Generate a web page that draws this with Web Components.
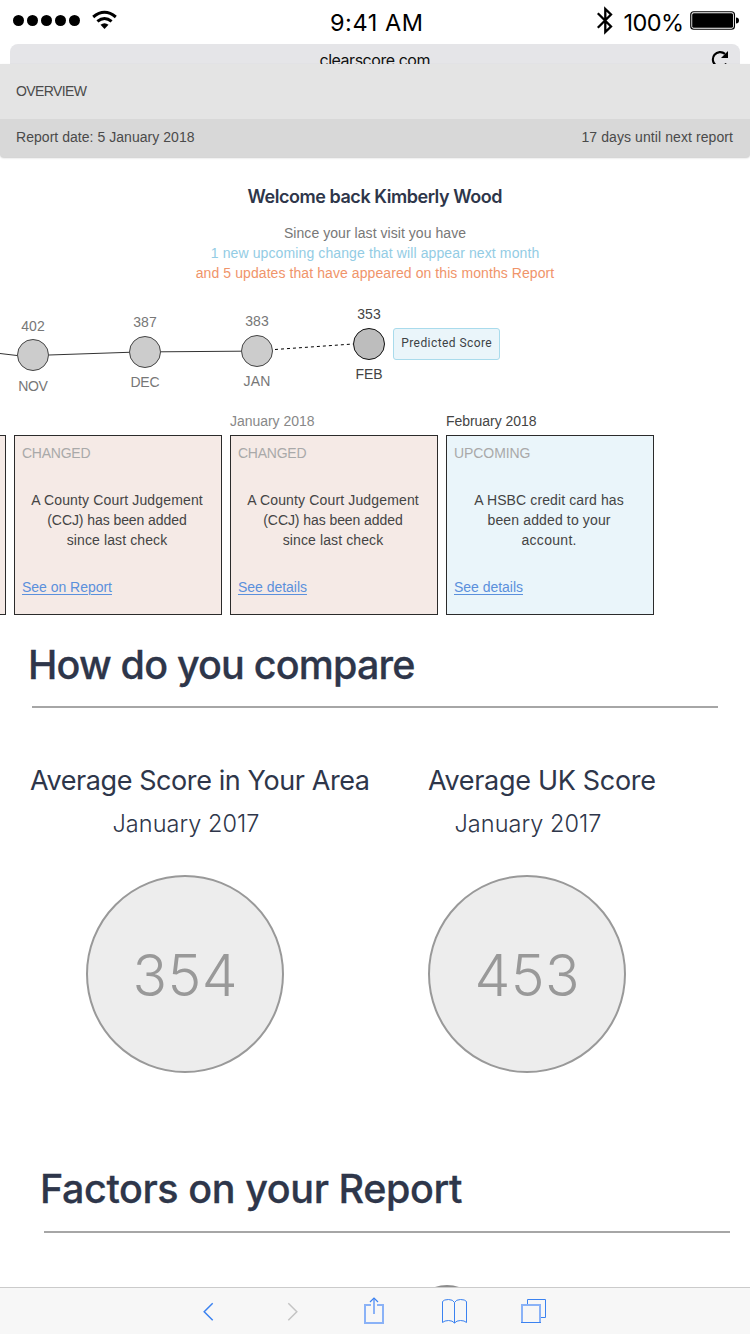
<!DOCTYPE html>
<html lang="en">
<head>
<meta charset="utf-8">
<title>Overview</title>
<style>
body{margin:0;background:#fff}
</style>
</head>
<body>
<score-app></score-app>
<script>
const define = (name, html, setup) => {
  const t = document.createElement('template');
  t.innerHTML = html;
  customElements.define(name, class extends HTMLElement {
    connectedCallback() {
      if (this.shadowRoot) return;
      this.attachShadow({mode: 'open'}).append(t.content.cloneNode(true));
      if (setup) setup(this, this.shadowRoot);
    }
  });
};

/* A line of text tracked out or in to a given advance width. */
define('fit-text', `<style>
:host{display:block;white-space:nowrap;width:max-content}
</style><slot></slot>`, el => {
  const w = parseFloat(el.getAttribute('w'));
  if (!w) return;
  const n = el.textContent.length;
  const natural = el.getBoundingClientRect().width;
  const ls = (w - natural) / (n - 1);
  el.style.letterSpacing = ls.toFixed(3) + 'px';
  el.style.marginRight = (-ls).toFixed(3) + 'px';
});

define('status-bar', `<style>
:host{display:grid;grid-template-columns:1fr 92px 1fr;height:44px;font:400 23.5px/28px Inter,sans-serif;color:#000}
svg{display:block}
.time{padding:9px 0 0 1px}
.right{display:flex;justify-content:flex-end;gap:6px;padding-right:10px}
.pct{padding:9px 0 0 5px}
</style>
<svg width="120" height="44" viewBox="0 0 120 44">
 <g><circle cx="18.5" cy="20.5" r="5.5"/><circle cx="32.5" cy="20.5" r="5.5"/><circle cx="46.5" cy="20.5" r="5.5"/><circle cx="60.5" cy="20.5" r="5.5"/><circle cx="74.5" cy="20.5" r="5.5"/></g>
 <g fill="none" stroke="#000" stroke-width="3"><path d="M93.2 17Q104.5 7.600 115.800 17"/><path d="M97.400 21.400Q104.500 15.600 111.600 21.400"/></g>
 <path d="M100.500 24.800Q104.500 21.600 108.500 24.800L104.500 29Z"/>
</svg>
<div class="time"><fit-text w="93">9:41 AM</fit-text></div>
<div class="right">
 <svg width="18" height="44" viewBox="594 0 18 44"><path d="M596.800 13.200L610 26.500L604.300 32V9L610 14.500L596.800 27.800" fill="none" stroke="#000" stroke-width="2.300"/></svg>
 <div class="pct"><fit-text w="60.500">100%</fit-text></div>
 <svg width="50" height="44" viewBox="690 0 50 44"><rect x="690.750" y="11.750" width="43.700" height="17.500" rx="3" fill="none" stroke="#000" stroke-width="1.200"/><rect x="692.200" y="13.200" width="40.800" height="14.600" rx="1.500"/><path d="M736 17.500Q739 17.500 739 20.500T736 23.500Z"/></svg>
</div>`);

define('url-bar', `<style>
:host{display:grid;grid-template-columns:60px 1fr 60px;justify-items:center;height:20px;margin:0 10px;overflow:hidden;background:#e5e5e8;border-radius:8px 8px 0 0;font:400 16px/20px Inter,sans-serif;color:#111}
fit-text{margin-top:6px}
</style>
<span></span><fit-text w="111">clearscore.com</fit-text>
<svg width="60" height="20" viewBox="680 44 60 20"><path d="M726.200 63.500A7.300 7.300 0 1 1 725 53.900" fill="none" stroke="#000" stroke-width="2.100"/><path d="M728 51V58H721Z"/></svg>`);

define('report-header', `<style>
:host{display:block;font:14px/20px "Liberation Sans",sans-serif;color:#4a4a4a;background:#d8d8d8;border-radius:0 0 4px 4px;box-shadow:0 1px 2px rgba(0,0,0,.22)}
.top{height:38px;padding:17px 16px 0;background:#e4e4e4}
.sub{display:flex;justify-content:space-between;height:30px;padding:8px 17px 0 16px}
</style>
<div class="top"><fit-text w="71">OVERVIEW</fit-text></div>
<div class="sub"><fit-text w="178.500">Report date: 5 January 2018</fit-text><fit-text w="151.500">17 days until next report</fit-text></div>`);

define('welcome-note', `<style>
:host{display:flex;flex-direction:column;align-items:center;height:139px;box-sizing:border-box;padding-top:28px;font:14px/20px "Liberation Sans",sans-serif;color:#777}
.hi{font:600 18px/24px Inter,sans-serif;color:#2e364a;margin-bottom:14px}
.new{color:#93cce4}.upd{color:#f0946a}
</style>
<fit-text class="hi" w="255">Welcome back Kimberly Wood</fit-text>
<fit-text w="182">Since your last visit you have</fit-text>
<fit-text class="new" w="328.500">1 new upcoming change that will appear next month</fit-text>
<fit-text class="upd" w="358.500">and 5 updates that have appeared on this months Report</fit-text>`);

define('score-node', `<style>
:host{position:absolute;display:flex;flex-direction:column;align-items:center;width:60px;color:#777}
i{box-sizing:border-box;width:32px;height:32px;margin:4px 0;border-radius:50%;border:1px solid #444;background:#ccc}
:host([next]){color:#444}
:host([next]) i{background:#bdbdbd;border-color:#111}
:host([low]) i{margin:3px 0 5px}
</style><slot name="value"></slot><i></i><slot name="month"></slot>`, el => {
  el.style.left = el.getAttribute('cx') - 30 + 'px';
  el.style.top = el.getAttribute('cy') - (el.hasAttribute('low') ? 39 : 40) + 'px';
});

define('score-timeline', `<style>
:host{position:relative;display:block;height:115px;font:14px/20px "Liberation Sans",sans-serif}
svg{display:block}
.tip{position:absolute;left:393px;top:32px;box-sizing:border-box;width:107px;height:32px;display:flex;justify-content:center;border:1px solid #a9dbec;border-radius:3px;background:#eaf5fa;font:400 12px/28px Roboto,sans-serif;color:#3c4245}
</style>
<svg width="750" height="115" viewBox="0 296 750 115" fill="none" stroke="#333"><path d="M0 353.500L17 355.500M49 355L129 352.300M161 351.800L241 351.200"/><path d="M275 349.500L353 344" stroke="#000" stroke-dasharray="3 3"/></svg>
<score-node low cx="33" cy="59"><fit-text slot="value" w="23.500">402</fit-text><fit-text slot="month" w="29.500">NOV</fit-text></score-node>
<score-node cx="145" cy="56"><fit-text slot="value" w="23.500">387</fit-text><fit-text slot="month" w="29">DEC</fit-text></score-node>
<score-node cx="257" cy="55"><fit-text slot="value" w="23.500">383</fit-text><fit-text slot="month" w="27">JAN</fit-text></score-node>
<score-node cx="369" cy="48" next><fit-text slot="value" w="23.500">353</fit-text><fit-text slot="month" w="27">FEB</fit-text></score-node>
<div class="tip"><fit-text w="90.500">Predicted Score</fit-text></div>`);

define('event-card', `<style>
:host{display:block;width:208px;flex:none;font:14px/20px "Liberation Sans",sans-serif;color:#444}
.date{height:24px;color:#888}
:host([upcoming]) .date{color:#444}
.box{box-sizing:border-box;height:180px;padding:7px;border:1px solid #2b2b2b;background:#f5eae6;display:flex;flex-direction:column}
:host([upcoming]) .box{background:#eaf5fa}
.kind{color:#a9a9a9;margin-bottom:27px}
.body{display:flex;flex-direction:column;align-items:center;margin-bottom:27px;width:190px}
.link{color:#5b90dc;text-decoration:underline;text-underline-offset:2px;text-decoration-thickness:1px}
</style>
<div class="date"><slot name="date"></slot></div>
<div class="box"><div class="kind"><slot name="kind"></slot></div><div class="body"><slot></slot></div><div class="link"><slot name="link"></slot></div></div>`);

define('event-row', `<style>
:host{display:flex;gap:8px;margin-left:-202px;height:226px}
</style>
<event-card></event-card>
<event-card><fit-text slot="kind" w="68.500">CHANGED</fit-text><fit-text w="171.500">A County Court Judgement</fit-text><fit-text w="139.500">(CCJ) has been added</fit-text><fit-text w="100.500">since last check</fit-text><fit-text slot="link" w="90">See on Report</fit-text></event-card>
<event-card><fit-text slot="date" w="84.500">January 2018</fit-text><fit-text slot="kind" w="68.500">CHANGED</fit-text><fit-text w="171.500">A County Court Judgement</fit-text><fit-text w="139.500">(CCJ) has been added</fit-text><fit-text w="100.500">since last check</fit-text><fit-text slot="link" w="69">See details</fit-text></event-card>
<event-card upcoming><fit-text slot="date" w="90.500">February 2018</fit-text><fit-text slot="kind" w="76.500">UPCOMING</fit-text><fit-text w="149.500">A HSBC credit card has</fit-text><fit-text w="123">been added to your</fit-text><fit-text w="55">account.</fit-text><fit-text slot="link" w="69">See details</fit-text></event-card>`);

define('section-title', `<style>
:host{display:block;font:500 39.500px/48px Inter,sans-serif;color:#2e364a;-webkit-text-stroke:.3px #2e364a}
hr{width:686px;height:2px;margin:var(--rule-gap,17px) 0 0 6px;border:0;background:#a6a6a6}
::slotted(*){margin-left:2px}
</style><slot></slot><hr>`);

define('average-score', `<style>
:host{display:flex;flex-direction:column;align-items:center;color:#2e364a;font-family:Inter,sans-serif}
.title{align-self:flex-start;font-size:27px;line-height:32px;font-weight:400}
.date{font-size:23.500px;line-height:28px;font-weight:300;margin:13px 0 37px 2px}
.ring{box-sizing:border-box;width:198px;height:198px;padding-top:3px;border:2px solid #999;border-radius:50%;background:#ededed;display:flex;align-items:center;justify-content:center;font:300 57px/60px Inter,sans-serif;color:#999}
</style><div class="title"><slot name="title"></slot></div><div class="date"><slot name="date"></slot></div><div class="ring"><slot></slot></div>`);

define('compare-section', `<style>
:host{display:block;height:524px}
section-title{margin-left:26px}
.grid{display:grid;grid-template-columns:310px 198px;column-gap:88px;padding:57px 0 0 30px}
</style>
<section-title><fit-text w="387.500">How do you compare</fit-text></section-title>
<div class="grid">
<average-score><fit-text slot="title" w="340">Average Score in Your Area</fit-text><fit-text slot="date" w="147">January 2017</fit-text><fit-text w="105">354</fit-text></average-score>
<average-score><fit-text slot="title" w="228">Average UK Score</fit-text><fit-text slot="date" w="147">January 2017</fit-text><fit-text w="105">453</fit-text></average-score>
</div>`);

define('factors-section', `<style>
:host{display:block;height:122px;overflow:hidden}
section-title{margin-left:38px;--rule-gap:18px}
.ring{box-sizing:border-box;width:70px;height:70px;margin:52px 0 0 412px;border:2px solid #8c8c8c;border-radius:50%}
</style>
<section-title><fit-text w="422.500">Factors on your Report</fit-text></section-title><div class="ring"></div>`);

define('tool-bar', `<style>
:host{display:grid;grid-template-columns:28px 28px 28px 28px 28px;column-gap:53px;box-sizing:border-box;height:47px;padding-left:194px;border-top:1px solid #cbcbcb;background:#f7f7f7}
svg{display:block;fill:none;stroke:#3b82f0;stroke-width:1}
</style>
<svg width="28" height="46" viewBox="194 1288 28 46"><path d="M212.700 1303.200L204.200 1311.700L212.700 1320.200" stroke-width="1.500"/></svg>
<svg width="28" height="46" viewBox="275 1288 28 46"><path d="M288.300 1303.200L296.800 1311.700L288.300 1320.200" stroke="#c4c4c4" stroke-width="1.500"/></svg>
<svg width="28" height="46" viewBox="356 1288 28 46" overflow="visible"><path d="M371 1305H365V1323H383V1305H377" stroke="#8ab2f7" stroke-width="2"/><path d="M374 1298V1314" stroke="#8ab2f7" stroke-width="2"/><path d="M370 1302L374 1298L378 1302" stroke-width="1.200"/></svg>
<svg width="28" height="46" viewBox="437 1288 28 46" overflow="visible"><path d="M454.500 1302.500Q453 1299.500 448.500 1299.500T442.500 1301.500V1322.500Q444.500 1320.500 448.500 1320.500T454.500 1323M454.500 1302.500Q456 1299.500 460.500 1299.500T466.500 1301.500V1322.500Q464.500 1320.500 460.500 1320.500T454.500 1323M454.500 1302.500V1323"/></svg>
<svg width="28" height="46" viewBox="518 1288 28 46" overflow="visible"><path d="M527.500 1304V1299.500H545.500V1317.500H541"/><path d="M522 1322.500V1305H540V1322.500" stroke="#8ab2f7" stroke-width="2"/><path d="M521 1322.500H541"/></svg>`);

define('score-app', `<style>
:host{display:flex;flex-direction:column;width:750px;height:1334px;overflow:hidden;background:#fff}
:host>*{flex:none}
compare-section{margin-top:4px}
</style>
<status-bar></status-bar><url-bar></url-bar><report-header></report-header><welcome-note></welcome-note><score-timeline></score-timeline><event-row></event-row>
<compare-section></compare-section><factors-section></factors-section><tool-bar></tool-bar>`);
</script>
</body>
</html>
